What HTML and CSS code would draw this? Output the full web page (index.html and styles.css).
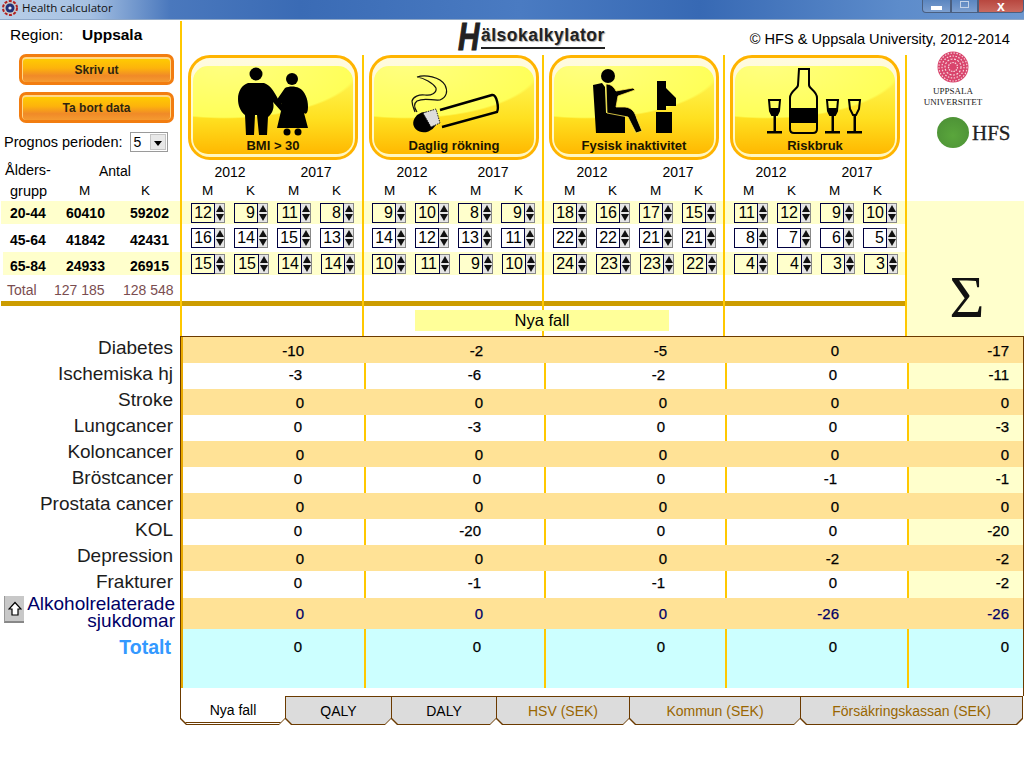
FILE: index.html
```html
<!DOCTYPE html>
<html lang="sv">
<head>
<meta charset="utf-8">
<title>Health calculator</title>
<link rel="stylesheet" href="styles.css">
</head>
<body>

<div class="titlebar">
  <svg class="app-icon" width="16" height="16" viewBox="0 0 16 16"><circle cx="8" cy="8" r="7" fill="#c9c9c9" stroke="#b02020" stroke-width="2" stroke-dasharray="3 1.5"/><circle cx="8" cy="8" r="4.5" fill="#20307a"/><circle cx="8" cy="8" r="1.6" fill="#e8e8f0"/></svg>
  <span class="app-name">Health calculator</span>
  <div class="win-buttons">
    <div class="win-btn win-min"><i></i></div>
    <div class="win-btn win-max"><i></i></div>
    <div class="win-btn win-close">x</div>
  </div>
</div>

<div class="top">
  <div class="left-panel">
    <div class="region"><span class="region-label">Region:</span><b>Uppsala</b></div>
    <div class="action-btn">Skriv ut</div>
    <div class="action-btn">Ta bort data</div>
    <div class="period">
      <span>Prognos perioden:</span>
      <div class="combo"><span class="combo-val">5</span><span class="combo-btn"></span></div>
    </div>
    <div class="age-head">
      <span class="ah-1">Ålders-</span><span class="ah-2">Antal</span>
      <span class="ah-3">grupp</span><span class="ah-4">M</span><span class="ah-5">K</span>
    </div>
    <div class="age-row band"><span>20-44</span><span>60410</span><span>59202</span></div>
    <div class="age-row mid"><span>45-64</span><span>41842</span><span>42431</span></div>
    <div class="age-row band band-last"><span>65-84</span><span>24933</span><span>26915</span></div>
    <div class="total-row"><span>Total</span><span>127 185</span><span>128 548</span></div>
    <div class="rule rule-left"></div>
  </div>

  <div class="main">
    <div class="brand">
      <div class="logo"><span class="logo-h">H</span><span class="logo-rest">älsokalkylator</span></div>
      <div class="copyright">© HFS &amp; Uppsala University, 2012-2014</div>
    </div>

    <div class="cols">
      <div class="col col-first">
        <div class="card">
          <svg class="card-icon" viewBox="0 0 170 104">
            <circle cx="68" cy="19" r="6.5"/>
            <path d="M60 28H76C82 30 86 36 90 44L96 52 93 56 85 47C87 54 83 60 80 62L79 80H71L69 60H67L66 80H58L57 60C52 56 50 50 50 44 50 36 54 30 60 28Z"/>
            <circle cx="104" cy="24" r="6"/>
            <path d="M97 33C101 31 107 31 111 33 117 36 120 44 120 52 120 58 118 60 116 58L120 73H89L93 56 94 48 92 52 88 46Z"/>
            <circle cx="99" cy="77" r="3.5"/><circle cx="110" cy="77" r="3.5"/>
          </svg>
          <div class="card-inner"><span class="card-label">BMI &gt; 30</span></div>
        </div>
        <div class="years"><span>2012</span><span>2017</span></div>
        <div class="mk"><span>M</span><span>K</span><span>M</span><span>K</span></div>
        <div class="spins band">
          <div class="spin"><span class="val">12</span><span class="arrows"><i class="up"></i><i class="down"></i></span></div>
          <div class="spin"><span class="val">9</span><span class="arrows"><i class="up"></i><i class="down"></i></span></div>
          <div class="spin"><span class="val">11</span><span class="arrows"><i class="up"></i><i class="down"></i></span></div>
          <div class="spin"><span class="val">8</span><span class="arrows"><i class="up"></i><i class="down"></i></span></div>
        </div>
        <div class="spins mid">
          <div class="spin"><span class="val">16</span><span class="arrows"><i class="up"></i><i class="down"></i></span></div>
          <div class="spin"><span class="val">14</span><span class="arrows"><i class="up"></i><i class="down"></i></span></div>
          <div class="spin"><span class="val">15</span><span class="arrows"><i class="up"></i><i class="down"></i></span></div>
          <div class="spin"><span class="val">13</span><span class="arrows"><i class="up"></i><i class="down"></i></span></div>
        </div>
        <div class="spins band band-last">
          <div class="spin"><span class="val">15</span><span class="arrows"><i class="up"></i><i class="down"></i></span></div>
          <div class="spin"><span class="val">15</span><span class="arrows"><i class="up"></i><i class="down"></i></span></div>
          <div class="spin"><span class="val">14</span><span class="arrows"><i class="up"></i><i class="down"></i></span></div>
          <div class="spin"><span class="val">14</span><span class="arrows"><i class="up"></i><i class="down"></i></span></div>
        </div>
        <div class="col-gap"></div>
        <div class="rule"></div>
      </div>

      <div class="col">
        <div class="card">
          <svg class="card-icon" viewBox="0 0 170 104">
            <path d="M71 55 123 40C128 39 130 53 128 57L73 72" fill="none" stroke="#000" stroke-width="2.4"/>
            <ellipse cx="56" cy="67" rx="12" ry="10" transform="rotate(-20 56 67)"/>
            <path d="M54 58 67 54 71 68 62 72Z" fill="#ddd" stroke="#222" stroke-width="1" stroke-dasharray="1.5 1"/>
            <path d="M48 22C56 19 71 22 76 30 79 36 78 42 71 45 63 46 56 42 48 46 44 49 46 54 48 57M48 22C55 23 64 28 67 33 68 38 62 41 56 40 50 39 44 42 43 46 43 50 45 54 46 57" fill="none" stroke="#111" stroke-width="1.200"/>
          </svg>
          <div class="card-inner"><span class="card-label">Daglig rökning</span></div>
        </div>
        <div class="years"><span>2012</span><span>2017</span></div>
        <div class="mk"><span>M</span><span>K</span><span>M</span><span>K</span></div>
        <div class="spins band">
          <div class="spin"><span class="val">9</span><span class="arrows"><i class="up"></i><i class="down"></i></span></div>
          <div class="spin"><span class="val">10</span><span class="arrows"><i class="up"></i><i class="down"></i></span></div>
          <div class="spin"><span class="val">8</span><span class="arrows"><i class="up"></i><i class="down"></i></span></div>
          <div class="spin"><span class="val">9</span><span class="arrows"><i class="up"></i><i class="down"></i></span></div>
        </div>
        <div class="spins mid">
          <div class="spin"><span class="val">14</span><span class="arrows"><i class="up"></i><i class="down"></i></span></div>
          <div class="spin"><span class="val">12</span><span class="arrows"><i class="up"></i><i class="down"></i></span></div>
          <div class="spin"><span class="val">13</span><span class="arrows"><i class="up"></i><i class="down"></i></span></div>
          <div class="spin"><span class="val">11</span><span class="arrows"><i class="up"></i><i class="down"></i></span></div>
        </div>
        <div class="spins band band-last">
          <div class="spin"><span class="val">10</span><span class="arrows"><i class="up"></i><i class="down"></i></span></div>
          <div class="spin"><span class="val">11</span><span class="arrows"><i class="up"></i><i class="down"></i></span></div>
          <div class="spin"><span class="val">9</span><span class="arrows"><i class="up"></i><i class="down"></i></span></div>
          <div class="spin"><span class="val">10</span><span class="arrows"><i class="up"></i><i class="down"></i></span></div>
        </div>
        <div class="col-gap"></div>
        <div class="rule"></div>
      </div>

      <div class="col">
        <div class="card">
          <svg class="card-icon" viewBox="0 0 170 104">
            <path d="M44 30 53 28 56 32 57 58 76 52 76 78H47Z"/>
            <circle cx="59" cy="21" r="7"/>
            <path d="M57 29C62 29 65 32 67 36L84 33 86 35 69 41 67 52 76 52C84 53 86 58 88 64L93 76 87 78 79 62 58 58Z" stroke="#ffe850" stroke-width=".8"/>
            <path d="M108 26H117V55H108ZM117 33 127 43V51H117ZM107 57H123V78H107Z"/>
          </svg>
          <div class="card-inner"><span class="card-label">Fysisk inaktivitet</span></div>
        </div>
        <div class="years"><span>2012</span><span>2017</span></div>
        <div class="mk"><span>M</span><span>K</span><span>M</span><span>K</span></div>
        <div class="spins band">
          <div class="spin"><span class="val">18</span><span class="arrows"><i class="up"></i><i class="down"></i></span></div>
          <div class="spin"><span class="val">16</span><span class="arrows"><i class="up"></i><i class="down"></i></span></div>
          <div class="spin"><span class="val">17</span><span class="arrows"><i class="up"></i><i class="down"></i></span></div>
          <div class="spin"><span class="val">15</span><span class="arrows"><i class="up"></i><i class="down"></i></span></div>
        </div>
        <div class="spins mid">
          <div class="spin"><span class="val">22</span><span class="arrows"><i class="up"></i><i class="down"></i></span></div>
          <div class="spin"><span class="val">22</span><span class="arrows"><i class="up"></i><i class="down"></i></span></div>
          <div class="spin"><span class="val">21</span><span class="arrows"><i class="up"></i><i class="down"></i></span></div>
          <div class="spin"><span class="val">21</span><span class="arrows"><i class="up"></i><i class="down"></i></span></div>
        </div>
        <div class="spins band band-last">
          <div class="spin"><span class="val">24</span><span class="arrows"><i class="up"></i><i class="down"></i></span></div>
          <div class="spin"><span class="val">23</span><span class="arrows"><i class="up"></i><i class="down"></i></span></div>
          <div class="spin"><span class="val">23</span><span class="arrows"><i class="up"></i><i class="down"></i></span></div>
          <div class="spin"><span class="val">22</span><span class="arrows"><i class="up"></i><i class="down"></i></span></div>
        </div>
        <div class="col-gap"></div>
        <div class="rule"></div>
      </div>

      <div class="col">
        <div class="card">
          <svg class="card-icon" viewBox="0 0 170 104">
            <path d="M69 14H79V30C79 34 87 36 87 43V74Q87 78 83 78H64Q60 78 60 74V43C60 36 68 34 68 30Z" fill="none" stroke="#000" stroke-width="2"/>
            <path d="M60 53H87V68H60Z"/>
            <path d="M39 45H50L49 56 47 60H42L40 56Z" fill="none" stroke="#000" stroke-width="2"/>
            <path d="M40 53H49L48 59 45 61 41 59ZM43.500 60H46V76H43.500ZM37 76H52V78.500H37Z"/>
            <path d="M97 45H108L107 56 105 60H100L98 56Z" fill="none" stroke="#000" stroke-width="2"/>
            <path d="M98 53H107L106 59 103 61 99 59ZM101.500 60H104V76H101.500ZM95 76H110V78.500H95Z"/>
            <path d="M119 45H130L129 54 126 60H123L120 54Z" fill="none" stroke="#000" stroke-width="2"/>
            <path d="M123.500 60H126V76H123.500ZM117 76H132V78.500H117Z"/>
          </svg>
          <div class="card-inner"><span class="card-label">Riskbruk</span></div>
        </div>
        <div class="years"><span>2012</span><span>2017</span></div>
        <div class="mk"><span>M</span><span>K</span><span>M</span><span>K</span></div>
        <div class="spins band">
          <div class="spin"><span class="val">11</span><span class="arrows"><i class="up"></i><i class="down"></i></span></div>
          <div class="spin"><span class="val">12</span><span class="arrows"><i class="up"></i><i class="down"></i></span></div>
          <div class="spin"><span class="val">9</span><span class="arrows"><i class="up"></i><i class="down"></i></span></div>
          <div class="spin"><span class="val">10</span><span class="arrows"><i class="up"></i><i class="down"></i></span></div>
        </div>
        <div class="spins mid">
          <div class="spin"><span class="val">8</span><span class="arrows"><i class="up"></i><i class="down"></i></span></div>
          <div class="spin"><span class="val">7</span><span class="arrows"><i class="up"></i><i class="down"></i></span></div>
          <div class="spin"><span class="val">6</span><span class="arrows"><i class="up"></i><i class="down"></i></span></div>
          <div class="spin"><span class="val">5</span><span class="arrows"><i class="up"></i><i class="down"></i></span></div>
        </div>
        <div class="spins band band-last">
          <div class="spin"><span class="val">4</span><span class="arrows"><i class="up"></i><i class="down"></i></span></div>
          <div class="spin"><span class="val">4</span><span class="arrows"><i class="up"></i><i class="down"></i></span></div>
          <div class="spin"><span class="val">3</span><span class="arrows"><i class="up"></i><i class="down"></i></span></div>
          <div class="spin"><span class="val">3</span><span class="arrows"><i class="up"></i><i class="down"></i></span></div>
        </div>
        <div class="col-gap"></div>
        <div class="rule"></div>
      </div>

      <div class="sum-col">
        <div class="partners">
          <svg class="seal" width="32" height="32" viewBox="0 0 32 32">
            <circle cx="16" cy="16" r="15.500" fill="#d9446c"/>
            <circle cx="16" cy="16" r="14" fill="none" stroke="#f6d5dd" stroke-width="1.200" stroke-dasharray="1.500 1.500"/>
            <circle cx="16" cy="16" r="11" fill="none" stroke="#f6d5dd" stroke-width="1.200" stroke-dasharray="1.500 1.500"/>
            <circle cx="16" cy="16" r="8" fill="none" stroke="#f6d5dd" stroke-width="1.200" stroke-dasharray="2 1.500"/>
            <circle cx="16" cy="16" r="4.500" fill="none" stroke="#f6d5dd" stroke-width="1.200" stroke-dasharray="1.500 1"/>
          </svg>
          <div class="uni-name">UPPSALA<br>UNIVERSITET</div>
          <div class="hfs"><span class="hfs-dot"></span><span class="hfs-text">HFS</span></div>
        </div>
        <div class="sum-fill"><span class="sigma">Σ</span></div>
      </div>
    </div>
  </div>
  <div class="section-title">Nya fall</div>
</div>

<div class="results">
  <div class="labels">
    <div class="label">Diabetes</div>
    <div class="label">Ischemiska hj</div>
    <div class="label">Stroke</div>
    <div class="label">Lungcancer</div>
    <div class="label">Koloncancer</div>
    <div class="label">Bröstcancer</div>
    <div class="label">Prostata cancer</div>
    <div class="label">KOL</div>
    <div class="label">Depression</div>
    <div class="label label-tall">Frakturer</div>
    <div class="label-alc">
      <div class="up-btn"><svg width="14" height="16" viewBox="0 0 14 16"><path d="M7 1.500 13 8H10V14H4V8H1Z" fill="#fff" stroke="#000" stroke-width="1.200"/></svg></div>
      <div class="alc-text">Alkoholrelaterade<br>sjukdomar</div>
    </div>
    <div class="label-total">Totalt</div>
  </div>

  <div class="table">
    <div class="row odd"><span>-10</span><span>-2</span><span>-5</span><span>0</span><span>-17</span></div>
    <div class="row even"><span>-3</span><span>-6</span><span>-2</span><span>0</span><span>-11</span></div>
    <div class="row odd"><span>0</span><span>0</span><span>0</span><span>0</span><span>0</span></div>
    <div class="row even"><span>0</span><span>-3</span><span>0</span><span>0</span><span>-3</span></div>
    <div class="row odd"><span>0</span><span>0</span><span>0</span><span>0</span><span>0</span></div>
    <div class="row even"><span>0</span><span>0</span><span>0</span><span>-1</span><span>-1</span></div>
    <div class="row odd"><span>0</span><span>0</span><span>0</span><span>0</span><span>0</span></div>
    <div class="row even"><span>0</span><span>-20</span><span>0</span><span>0</span><span>-20</span></div>
    <div class="row odd"><span>0</span><span>0</span><span>0</span><span>-2</span><span>-2</span></div>
    <div class="row even row-tall"><span>0</span><span>-1</span><span>-1</span><span>0</span><span>-2</span></div>
    <div class="row odd row-alc"><span>0</span><span>0</span><span>0</span><span>-26</span><span>-26</span></div>
    <div class="row even row-total"><span>0</span><span>0</span><span>0</span><span>0</span><span>0</span></div>
  </div>
</div>

<div class="tabs">
  <div class="tab tab-active"><span>Nya fall</span></div>
  <div class="tab tab-2"><span>QALY</span></div>
  <div class="tab tab-3"><span>DALY</span></div>
  <div class="tab tab-4 tab-sek"><span>HSV (SEK)</span></div>
  <div class="tab tab-5 tab-sek"><span>Kommun (SEK)</span></div>
  <div class="tab tab-6 tab-sek"><span>Försäkringskassan (SEK)</span></div>
</div>

</body>
</html>
```

FILE: styles.css
```css
* {
  box-sizing: border-box;
}

html, body {
  margin: 0;
  height: 768px;
  overflow: hidden;
  background: #fff;
  font-family: "Liberation Sans", Arial, sans-serif;
  color: #000;
}

/* window title */
.titlebar {
  height: 21px;
  display: flex;
  align-items: flex-start;
  padding: 0 0 0 2px;
  background: linear-gradient(90deg, #b9cfe8 0, #a5c0e2 90px, #4a78bd 170px, #3a6bb5 300px, #4a7bc2 520px, #3769b4 700px, #5d8ccb 900px, #6d97cf 1024px);
  border-bottom: 1px solid #fff;
  box-shadow: inset 0 -1px 0 #8fa8c8;
}

.app-name {
  margin-left: 4px;
  font: 11.500px/15px "Open Sans", sans-serif;
  color: #111;
}

.win-buttons {
  margin-left: auto;
  display: flex;
  height: 13px;
}

.win-btn {
  border: 1px solid #4a5f80;
  border-top: 0;
  display: flex;
  align-items: center;
  justify-content: center;
}

.win-min {
  width: 29px;
  border-radius: 0 0 0 4px;
  background: linear-gradient(#5b86c0, #7c9fd0);
}

.win-min i {
  width: 11px;
  height: 4px;
  margin-top: 3px;
  background: #fff;
}

.win-max {
  width: 27px;
  background: linear-gradient(#5b86c0, #7c9fd0);
}

.win-max i {
  width: 9px;
  height: 7px;
  margin-top: -3px;
  border: 1px solid #c3d2e8;
}

.win-close {
  width: 46px;
  border-radius: 0 0 4px 0;
  background: linear-gradient(#b8473f, #c9695f);
  color: #fff;
  font: bold 14px/10px "Liberation Sans", sans-serif;
}

/* upper part */
.top {
  position: relative;
  display: flex;
  height: 315px;
}

.left-panel {
  width: 182px;
  border-right: 2px solid #ffc800;
  display: flex;
  flex-direction: column;
  flex: none;
}

.region {
  height: 33px;
  padding: 5px 0 0 10px;
  font-size: 15.500px;
  line-height: 18px;
}

.region-label {
  display: inline-block;
  width: 72px;
}

.action-btn {
  width: 155px;
  height: 31px;
  margin: 0 0 7px 19px;
  border: 3px solid #f27d10;
  border-radius: 7px;
  background: linear-gradient(#ffd000 0, #fdb30c 45%, #f08a28 75%, #f59a30 100%);
  box-shadow: inset 0 1px 0 1px #ffd88a;
  text-align: center;
  font-size: 12px;
  font-weight: bold;
  line-height: 27px;
  color: #2f2510;
}

.period {
  height: 20px;
  margin-top: 2px;
  padding-left: 4px;
  display: flex;
  align-items: center;
  font-size: 14.500px;
}

.combo {
  width: 38px;
  height: 20px;
  margin-left: 7px;
  border: 1px solid #9a9a9a;
  display: flex;
  background: #fff;
}

.combo-val {
  flex: 1;
  padding-left: 3px;
  font-size: 14px;
  line-height: 18px;
}

.combo-btn {
  width: 16px;
  margin: 1px;
  background: #e8e8e8;
  border: 1px solid #c4c4c4;
  position: relative;
}

.combo-btn::after {
  content: "";
  position: absolute;
  left: 3px;
  top: 6px;
  border: 4px solid transparent;
  border-top: 5px solid #000;
  border-bottom: 0;
}

.age-head {
  height: 41px;
  margin-top: 8px;
  display: grid;
  grid-template-columns: 62px 60px 58px;
  grid-template-rows: 21px 20px;
  font-size: 13.500px;
  line-height: 20px;
}

.ah-1 {
  font-size: 14.500px;
  padding-left: 5px;
}

.ah-2 {
  grid-column: 2 / 4;
  padding-left: 37px;
  font-size: 14px;
  line-height: 22px;
}

.ah-3 {
  padding-left: 10px;
  font-size: 14.500px;
}

.ah-4 {
  padding-left: 17px;
}

.ah-5 {
  padding-left: 19px;
}

.age-row {
  display: grid;
  grid-template-columns: 56px 64px 1fr;
  padding-left: 9px;
  padding-top: 1px;
  align-items: center;
  font-size: 14px;
  font-weight: bold;
  margin-left: 1px;
}

.age-row.band {
  height: 23px;
}

.age-row.mid {
  height: 28px;
  padding-top: 3px;
  margin-left: 0;
  padding-left: 10px;
}

.age-row.band-last {
  margin-left: 3px;
  padding-left: 7px;
  height: 23px;
  padding-top: 4px;
}

.total-row {
  height: 26px;
  display: grid;
  grid-template-columns: 47px 69px 1fr;
  padding: 3px 0 0 7px;
  align-items: center;
  font-size: 14px;
  color: #7a4d50;
}

.band {
  background: #ffffcc;
}

.rule {
  height: 5px;
  background: #cc9c00;
}

.rule-left {
  margin-left: 1px;
}

/* brand + columns */
.main {
  flex: 1;
  min-width: 0;
  display: flex;
  flex-direction: column;
}

.brand {
  height: 34px;
  padding: 2px 14px 0 276px;
  display: flex;
  justify-content: space-between;
}

.logo {
  display: flex;
  align-items: flex-start;
  height: 30px;
  color: #222;
}

.logo-h {
  font-size: 38px;
  font-weight: bold;
  font-style: italic;
  line-height: 28px;
  width: 23px;
  transform: scaleX(.78);
  transform-origin: left;
  -webkit-text-stroke: 1px #222;
}

.logo-rest {
  font-size: 17.500px;
  font-weight: bold;
  line-height: 20px;
  letter-spacing: .5px;
  border-bottom: 2px solid #222;
  text-shadow: 1px 1px 1px #aaa;
  height: 24px;
  margin-top: 2px;
}

.copyright {
  font-size: 14.600px;
  line-height: 32px;
}

.cols {
  flex: 1;
  display: flex;
}

.col {
  border-right: 2px solid #ffc800;
  display: flex;
  flex-direction: column;
}

.col:nth-child(1) {
  width: 182px;
}

.col:nth-child(2) {
  width: 180px;
}

.col:nth-child(3) {
  width: 181px;
}

.col:nth-child(4) {
  width: 182px;
}

.card {
  position: relative;
  width: 170px;
  height: 105px;
  margin-left: 5px;
  border: 3px solid #ffb400;
  border-radius: 22px;
  padding: 8px 2px 3px;
  background: linear-gradient(#fffbe0, #fff7c0);
  flex: none;
}

.col-first .card {
  margin-left: 6px;
}

.card-inner {
  height: 100%;
  border-radius: 15px;
  background:
    radial-gradient(ellipse 85% 60% at 20% 0, #ffff80 0, #ffff58 97%, transparent 100%),
    linear-gradient(#fff450 15%, #ffe020 60%, #ffb800 100%);
  display: flex;
  align-items: flex-end;
  justify-content: center;
}

.card-label {
  position: relative;
  font-size: 13px;
  font-weight: bold;
  line-height: 16px;
  color: #1a1400;
}

.card-icon {
  position: absolute;
  left: -3px;
  top: -3px;
  width: 170px;
  height: 104px;
}

.years {
  height: 21px;
  display: grid;
  grid-template-columns: 86px 86px;
  padding-left: 5px;
  font-size: 14px;
  line-height: 24px;
  text-align: center;
  flex: none;
}

.col:nth-child(2) .years {
  grid-template-columns: 86px 76px;
}

.col:nth-child(4) .years {
  padding-left: 3px;
}

.mk {
  height: 20px;
  display: grid;
  grid-template-columns: repeat(4, 43px);
  padding-left: 4px;
  font-size: 13.500px;
  line-height: 19px;
  text-align: center;
  flex: none;
}

.col:nth-child(4) .mk {
  padding-left: 2px;
}

.spins {
  display: flex;
  gap: 9px;
  padding-left: 9px;
  flex: none;
}

.spins.band {
  height: 23px;
  padding-top: 2px;
}

.spins.mid {
  height: 28px;
  padding-top: 4px;
}

.col:nth-child(2) .spins {
  padding-left: 8px;
}

.spin {
  width: 34px;
  height: 20px;
  display: flex;
}

.band-last .spin:nth-child(2) {
  width: 35px;
}

.band-last .spin:nth-child(2) .val {
  width: 25px;
}

.val {
  width: 24px;
  border: 1px solid #000040;
  padding-right: 2px;
  text-align: right;
  font-size: 16px;
  line-height: 18px;
}

.arrows {
  width: 10px;
  border: 1px solid #888;
  border-left: 0;
  display: flex;
  flex-direction: column;
  align-items: center;
  justify-content: space-around;
  background: #e6e6e6;
}

.arrows i {
  width: 0;
  height: 0;
  border-left: 4px solid transparent;
  border-right: 4px solid transparent;
}

.arrows .up {
  border-bottom: 7px solid #111;
}

.arrows .down {
  border-top: 7px solid #111;
}

.col-gap {
  flex: 1;
  max-height: 26px;
}

.sum-col {
  flex: 1;
  min-width: 0;
  display: flex;
  flex-direction: column;
}

.partners {
  height: 146px;
  display: flex;
  flex-direction: column;
  align-items: center;
  padding: 0 25px 0 0;
}

.seal {
  margin-top: -4px;
  flex: none;
}

.uni-name {
  margin-top: 3px;
  font: 9px/11px "Liberation Serif", serif;
  text-align: center;
  color: #222;
}

.hfs {
  display: flex;
  align-items: center;
  align-self: flex-start;
  margin-top: 9px;
  margin-left: 30px;
}

.hfs-dot {
  width: 32px;
  height: 31px;
  border-radius: 50%;
  background: radial-gradient(circle at 50% 60%, #5aa63c, #4a8d35);
}

.hfs-text {
  margin-left: 3px;
  font: 21px/22px "Liberation Serif", serif;
  color: #222;
  -webkit-text-stroke: .3px #222;
}

.sum-fill {
  flex: 1;
  background: #ffffcc;
  display: flex;
  align-items: flex-end;
  justify-content: center;
}

.sigma {
  font: 60px/60px "Liberation Serif", serif;
  margin-bottom: 9px;
  margin-left: 3px;
  color: #111;
}

.section-title {
  position: absolute;
  left: 415px;
  top: 289px;
  width: 254px;
  height: 21px;
  background: #ffff99;
  text-align: center;
  font-size: 16.500px;
  line-height: 21px;
}

/* results */
.results {
  display: flex;
  height: 360px;
}

.labels {
  width: 180px;
  padding-top: 1px;
  flex: none;
}

.label {
  height: 26px;
  padding-right: 7px;
  text-align: right;
  font-size: 19px;
  line-height: 22px;
  color: #1c1c1c;
}

.label-tall {
  height: 27px;
}

.label-alc {
  height: 31px;
  display: flex;
  padding-left: 4px;
}

.up-btn {
  width: 20px;
  height: 27px;
  margin-top: -2px;
  background: #c8c8c8;
  border-left: 1px solid #999;
  border-bottom: 2px solid #888;
  display: flex;
  align-items: center;
  justify-content: center;
}

.alc-text {
  flex: 1;
  padding-right: 5px;
  margin-top: -3px;
  text-align: right;
  font-size: 19px;
  line-height: 17px;
  color: #000066;
}

.label-total {
  padding: 8px 9px 0 0;
  text-align: right;
  font-size: 19.500px;
  font-weight: bold;
  line-height: 21px;
  color: #3399ff;
}

.table {
  flex: 1;
  border: 1px solid #6b3a00;
  border-bottom: 0;
}

.row {
  display: grid;
  grid-template-columns: 183px 180px 181px 182px 1fr;
  height: 26px;
  border-left: 2px solid #e8a800;
  font-size: 15px;
  text-align: right;
  -webkit-text-stroke: .25px;
}

.row span:nth-child(1) {
  padding-right: 62px;
}

.row span:nth-child(2) {
  padding-right: 63px;
}

.row span:nth-child(3) {
  padding-right: 60px;
}

.row span:nth-child(4) {
  padding-right: 70px;
}

.row span:nth-child(5) {
  padding-right: 14px;
}

.odd {
  background: #ffe296;
  line-height: 28px;
}

.even {
  background: #fff;
  line-height: 24px;
}

.even span:nth-child(-n+4) {
  border-right: 2px solid #ffc800;
}

.even span:nth-child(5) {
  background: #ffffcc;
}

.row-tall {
  height: 27px;
}

.row-alc {
  height: 31px;
  line-height: 32px;
  color: #000066;
}

.row-total {
  height: 59px;
  line-height: 36px;
}

.row-total,
.row-total span:nth-child(5) {
  background: #ccffff;
}

/* bottom tabs */
.tabs {
  display: flex;
  margin-left: 180px;
  width: 843px;
  height: 29px;
  font-size: 14px;
}

.tab {
  width: 106px;
  padding: 1px 0 1px 1px;
  background: #6b3a00;
  clip-path: polygon(0 0, 100% 0, 100% calc(100% - 6px), calc(100% - 6px) 100%, 6px 100%, 0 calc(100% - 6px));
}

.tab span {
  display: block;
  height: 100%;
  background: #dcdcdc;
  text-align: center;
  line-height: 29px;
  clip-path: polygon(0 0, 100% 0, 100% calc(100% - 6px), calc(100% - 6px) 100%, 6px 100%, 0 calc(100% - 6px));
}

.tab-active {
  width: 105px;
  padding: 0 0 1px 1px;
}

.tab-active span {
  background: #fff;
  box-shadow: inset 0 -1px 0 #fff, inset 0 -2px 0 #6b3a00;
}

.tab-3 {
  width: 105px;
}

.tab-4 {
  width: 133px;
}

.tab-5 {
  width: 171px;
}

.tab-6 {
  width: 223px;
  padding-right: 1px;
}

.tab-sek {
  color: #996600;
}
```
